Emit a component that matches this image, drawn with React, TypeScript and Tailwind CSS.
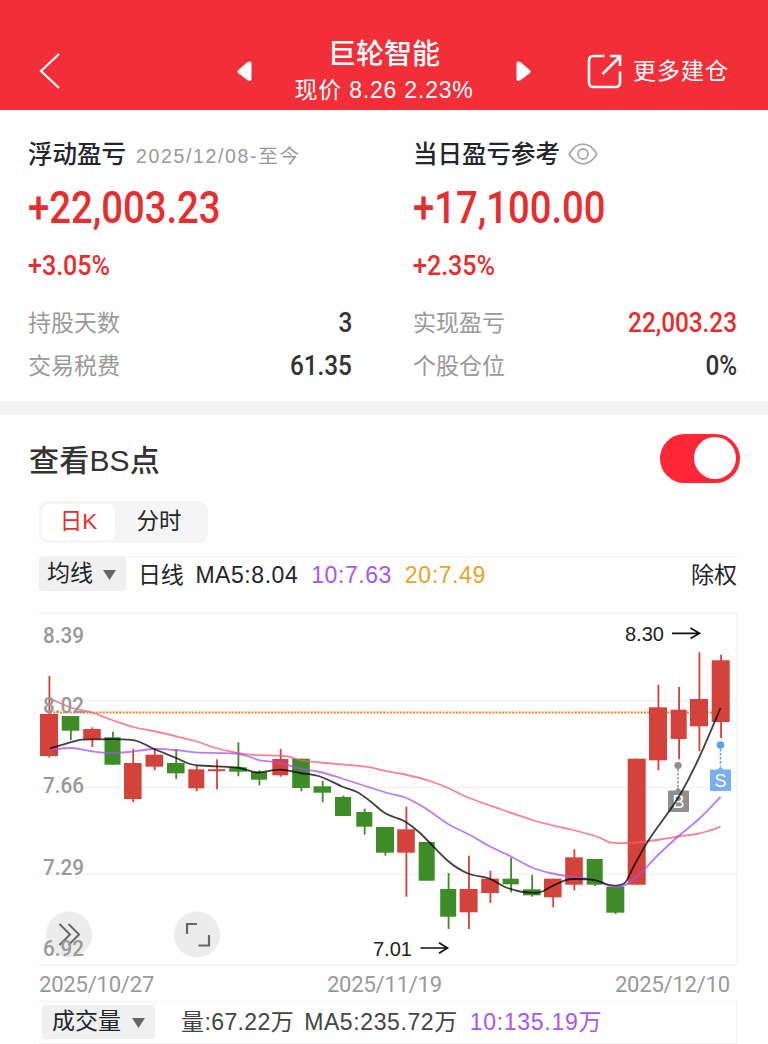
import React from 'react';
import clsx from 'clsx';

type Point = [number, number];

// [x, open/close top, open/close bottom, high, low, rising, body width]
type Candle = [number, number, number, number, number, boolean, number];

interface SummaryProps {
    title: React.ReactNode;
    amount: string;
    percent: string;
    rows: { label: string; value: string; valueClass: string }[];
}

const RED = '#d3433b';
const GREEN = '#3d8c28';

const candles: Candle[] = [
    [49, 714, 756, 676, 757.5, true, 18],
    [70.5, 716, 730.7, 716, 740, false, 17.6],
    [92, 729, 739, 727.3, 747, true, 17.6],
    [112.5, 737.3, 764.7, 731.7, 764.7, false, 16],
    [132.8, 763, 799, 749, 802.3, true, 17.6],
    [154.3, 754.7, 766.7, 749.7, 770.3, true, 17.6],
    [175.8, 763, 773.3, 749.3, 779, false, 17.6],
    [196.3, 769.3, 788.3, 765.7, 791.3, true, 16],
    [216.6, 769.2, 771.2, 759.3, 789.3, true, 17],
    [238, 767.3, 771.7, 742.3, 776.3, false, 17.6],
    [259, 772, 779.7, 770.3, 785.3, false, 16],
    [280.3, 759, 775.3, 749, 776.7, true, 16],
    [301, 758.7, 788, 758.7, 791.3, false, 17.6],
    [322.3, 786.3, 792.7, 781, 802.3, false, 17.6],
    [343, 797, 816, 795.7, 816, false, 16],
    [364.3, 812, 826.7, 808.7, 834.7, false, 16],
    [385, 827, 852.7, 827, 855.7, false, 18],
    [406, 829.3, 852.7, 806.7, 896.7, true, 17.6],
    [426.7, 842, 880.7, 842, 880.7, false, 16],
    [448.2, 889, 916.7, 873, 929, false, 16],
    [468.6, 889, 912.3, 855.7, 929, true, 18],
    [490, 878.7, 893, 870.7, 903, true, 17.6],
    [510.7, 878.7, 884.3, 857.7, 892.3, false, 16],
    [531.8, 889.3, 895.3, 875, 896.7, false, 17.6],
    [552.8, 878.7, 897.3, 878.7, 907.3, true, 17.6],
    [574, 857.3, 884.7, 849.3, 890.3, true, 17.6],
    [594.7, 859, 884.7, 859, 886, false, 16],
    [615.3, 886.7, 912.7, 886.7, 914, false, 18],
    [636.7, 758.7, 884.7, 758.7, 884.7, true, 18],
    [658, 707.3, 760.3, 684.7, 770.3, true, 18],
    [678.7, 709.7, 739, 687, 759.3, true, 16],
    [699, 699, 726.3, 652.3, 751.3, true, 18],
    [720.7, 660.3, 722, 654.7, 738, true, 18],
];

const ma5: Point[] = [
    [50, 748.5], [67, 743.3], [82, 739.7], [100, 739.3], [120, 739.3], [137, 741], [153, 748.5], [175, 757.5],
    [190, 764], [200, 765.5], [216, 766.3], [237, 767.5], [245, 769.3], [258, 772.5], [280, 769.7], [300, 773],
    [320, 776.5], [342, 786.5], [357, 792], [370, 801], [384, 812.5], [394, 817], [405, 821.5], [420, 833],
    [448, 861], [468, 873.5], [489, 878.5], [505, 887], [520, 891.5], [532, 892.7], [541, 892], [551, 886.7],
    [565, 880.3], [574, 879], [594, 880], [606, 884], [616, 885.7], [624, 883.5], [628, 878], [636, 862],
    [650, 838], [678, 798], [698, 760], [720.5, 708],
];

const ma10: Point[] = [
    [50, 749.5], [72, 748], [90, 751], [110, 753], [130, 751.8], [153, 749], [175, 750], [195, 752.3],
    [235, 753.5], [250, 757], [260, 760.3], [280, 763], [300, 768.5], [320, 772], [342, 778.5], [384, 792],
    [405, 797.5], [425, 808], [448, 824], [470, 835], [489, 846], [510, 856], [532, 867.5], [550, 873],
    [573, 877], [596, 880], [608, 885.5], [618, 887.3], [627, 884], [642, 872], [656, 857], [678, 836.5],
    [700, 818], [720.5, 797],
];

const ma20: Point[] = [
    [50, 698.5], [72, 708], [92, 712.5], [112, 720], [135, 727.5], [153, 731], [175, 736], [195, 741],
    [216, 748], [235, 752.5], [250, 754.7], [280, 755.7], [290, 757], [302, 760.7], [320, 762.5], [350, 765],
    [370, 767.3], [387, 771.3], [405, 774.5], [430, 781], [448, 788], [468, 797.5], [500, 809], [532, 820],
    [551, 825], [573, 830], [598, 837], [610, 842.3], [628, 843], [643, 841.8], [660, 839.5], [678, 836.5],
    [697, 834], [708, 831], [720.5, 826.7],
];

const priceLabels = [
    {text: '8.39', y: 643},
    {text: '8.02', y: 713},
    {text: '7.66', y: 793.3},
    {text: '7.29', y: 874.7},
    {text: '6.92', y: 956.3},
];

// Smooth curve through all points
function curve(points: Point[]) {
    let d = `M${points[0][0]} ${points[0][1]}`;
    for (let i = 0; i < points.length - 1; i++) {
        const a = points[i - 1] || points[i];
        const b = points[i];
        const c = points[i + 1];
        const e = points[i + 2] || c;
        d += ` C${b[0] + (c[0] - a[0]) / 6} ${b[1] + (c[1] - a[1]) / 6} ${c[0] - (e[0] - b[0]) / 6} ${c[1] - (e[1] - b[1]) / 6} ${c[0]} ${c[1]}`;
    }
    return d;
}

const Header: React.FC = () => (
    <header className="flex h-[110px] items-center bg-[#f22f38] text-white">
        <svg className="mt-[31px] ml-[38px] h-10 w-6" viewBox="0 0 24 40" fill="none" stroke="currentColor" strokeWidth="2.2">
            <path d="M21 3 L3 20 L21 37"/>
        </svg>
        <svg className="mt-[33px] ml-[174px] h-6 w-[18px]" viewBox="0 0 18 24" fill="currentColor">
            <path d="M2 10.2 L11 2.600 Q15.500 0 15.500 4 V18.500 Q15.500 22.500 11.500 20.300 L2 13 Q.8 11.600 2 10.200Z"/>
        </svg>
        <div className="mt-[31px] flex w-[260px] flex-col items-center">
            <h1 className="text-[28px] leading-[38px] font-medium">巨轮智能</h1>
            <p className="text-[23px] leading-[32px] tracking-[0.8px] whitespace-nowrap">现价 8.26 2.23%</p>
        </div>
        <svg className="mt-[33px] h-6 w-[18px]" viewBox="0 0 18 24" fill="currentColor">
            <path d="M16 10.2 L7 2.600 Q2.500 0 2.500 4 V18.500 Q2.500 22.500 6.500 20.300 L16 13 Q17.200 11.600 16 10.200Z"/>
        </svg>
        <button type="button" className="mt-[32px] ml-[54px] flex items-center">
            <svg className="h-9 w-9" viewBox="0 0 36 36" fill="none" stroke="currentColor" strokeWidth="2.6">
                <path d="M18.500 3 H7.500 Q3 3 3 7.500 V29.500 Q3 34 7.500 34 H29.500 Q34 34 34 29.500 V18.500"/>
                <path d="M16.500 21 L33.500 4 M24 3 H34 V13"/>
            </svg>
            <span className="ml-[11px] text-[23px] leading-9 tracking-[1px]">更多建仓</span>
        </button>
    </header>
);

const Summary: React.FC<SummaryProps> = ({title, amount, percent, rows}) => (
    <div className="w-[324px]">
        <div className="flex h-9 items-center whitespace-nowrap">{title}</div>
        <div className="mt-[5px] h-[60px] w-max origin-left scale-x-[0.85] font-[Roboto] text-[45px] leading-[60px] font-medium text-[#e62e2e]">
            {amount}
        </div>
        <div className="mt-[10px] w-max origin-left scale-x-[0.895] font-[Roboto] text-[28px] leading-9 font-medium text-[#e62e2e]">
            {percent}
        </div>
        <div className="mt-[18px]">
            {rows.map((row) => (
                <div key={row.label} className="flex h-[43px] items-center justify-between">
                    <span className="text-[23px] text-[#999]">{row.label}</span>
                    <span className={clsx('origin-right scale-x-[0.9] font-[Roboto] text-[27px] font-medium', row.valueClass)}>
                        {row.value}
                    </span>
                </div>
            ))}
        </div>
    </div>
);

const Caret: React.FC = () => (
    <svg className="mt-1 h-[10px] w-[13px]" viewBox="0 0 13 10" fill="#666">
        <path d="M0 0 H13 L6.500 10Z"/>
    </svg>
);

const CandleChart: React.FC = () => (
    <svg className="block h-[372px] w-[768px]" viewBox="0 597 768 372" fill="none">
        <path d="M39 613.500 H737 M39 700.500 H737 M39 787.500 H737 M39 874 H737 M39 965 H737 M737 613.500 V965" stroke="#f3f3f3" strokeWidth="1.300"/>

        {/* Floating chart buttons */}
        <circle cx="69" cy="934.500" r="23" fill="#ececec"/>
        <path d="M59.500 924 L70 934.500 L59.500 945 M68.500 924 L79 934.500 L68.500 945" stroke="#666" strokeWidth="2"/>
        <circle cx="197" cy="934.500" r="23" fill="#ececec"/>
        <path d="M187 934 V924 H197 M209 935 V945.500 H198.500" stroke="#666" strokeWidth="2.200"/>

        {/* Cost line */}
        <path d="M50 712.500 H712" stroke="#f0812f" strokeWidth="1.800" strokeDasharray="2 1.300"/>

        {candles.map(([x, top, bottom, high, low, rising, width]) => (
            <g key={x} fill={rising ? RED : GREEN}>
                <rect x={x - 0.5} y={high} width="1.800" height={low - high}/>
                <rect x={x - width / 2} y={top} width={width} height={bottom - top}/>
            </g>
        ))}

        {/* Buy marker */}
        <circle cx="678" cy="765.500" r="3.600" fill="#8f8f8f"/>
        <path d="M678 769 V789" stroke="#8f8f8f" strokeWidth="1.500" strokeDasharray="2.500 1.500"/>
        <path d="M669 790.500 H675 L678 787.500 L681 790.500 H688 Q689 790.500 689 791.500 V811 Q689 812 688 812 H669 Q668 812 668 811 V791.500 Q668 790.500 669 790.500Z" fill="#8f8f8f"/>
        <text x="678.500" y="807.500" textAnchor="middle" fontSize="18" fill="#fff" className="font-['Liberation_Sans']">B</text>

        {/* Sell marker */}
        <circle cx="720.500" cy="745" r="3.800" fill="#5b9ff0"/>
        <path d="M720.500 749 V766" stroke="#5b9ff0" strokeWidth="1.500" strokeDasharray="2.500 1.500"/>
        <path d="M711 769.500 H717.500 L720.500 766.500 L723.500 769.500 H730 Q731 769.500 731 770.500 V790 Q731 791 730 791 H711 Q710 791 710 790 V770.500 Q710 769.500 711 769.500Z" fill="#78b0f2"/>
        <text x="720.500" y="787" textAnchor="middle" fontSize="18" fill="#fff" className="font-['Liberation_Sans']">S</text>

        <g strokeWidth="1.800">
            <path d={curve(ma20)} stroke="#f5596f" strokeOpacity="0.750"/>
            <path d={curve(ma10)} stroke="#a450ee" strokeOpacity="0.750"/>
            <path d={curve(ma5)} stroke="#000" strokeOpacity="0.750"/>
        </g>

        <g fontSize="22" fontWeight="500" fill="#999" className="font-[Roboto]">
            {priceLabels.map((label) => (
                <text key={label.text} x="43" y={label.y} textLength="41" lengthAdjust="spacingAndGlyphs">{label.text}</text>
            ))}
        </g>

        {/* High and low callouts */}
        <g fontSize="20" fill="#222" className="font-['Liberation_Sans']">
            <text x="625" y="641">8.30</text>
            <text x="373" y="955.500">7.01</text>
        </g>
        <g stroke="#111" strokeWidth="1.700">
            <path d="M672 633.300 H699 M690.500 628 L699.500 633.300 L690.500 638.500"/>
            <path d="M420.500 948 H447 M439 942.700 L447.500 948 L439 953.300"/>
        </g>
    </svg>
);

const App: React.FC = () => {
    return (
        <div className="h-[1044px] w-[768px] overflow-hidden bg-[#fefefe] font-['Liberation_Sans','Noto_Sans_CJK_SC',sans-serif] text-[#222529]">
            <Header/>

            {/* Profit summary */}
            <section className="flex h-[291px] justify-between pt-[27px] pr-[31px] pl-[28px]">
                <Summary
                    title={
                        <>
                            <h2 className="text-[24.5px] font-medium">浮动盈亏</h2>
                            <span className="mt-[3px] ml-[10px] text-[19.500px] tracking-[1.650px] text-[#999]">2025/12/08-至今</span>
                        </>
                    }
                    amount="+22,003.23"
                    percent="+3.05%"
                    rows={[
                        {label: '持股天数', value: '3', valueClass: 'text-[#333]'},
                        {label: '交易税费', value: '61.35', valueClass: 'text-[#333]'},
                    ]}
                />
                <Summary
                    title={
                        <>
                            <h2 className="text-[24.5px] font-medium">当日盈亏参考</h2>
                            <svg className="mb-[2px] ml-[8px] h-[22px] w-[30px]" viewBox="0 0 30 22" fill="none" stroke="#aaa" strokeWidth="1.800">
                                <path d="M1.200 11 Q7 1.200 15 1.200 T28.800 11 Q23 20.800 15 20.800 T1.200 11Z"/>
                                <circle cx="15" cy="11" r="5"/>
                            </svg>
                        </>
                    }
                    amount="+17,100.00"
                    percent="+2.35%"
                    rows={[
                        {label: '实现盈亏', value: '22,003.23', valueClass: 'text-[#e62e2e]'},
                        {label: '个股仓位', value: '0%', valueClass: 'text-[#333]'},
                    ]}
                />
            </section>

            <div className="h-[14px] bg-[#f3f3f3]"/>

            <section>
                <div className="flex h-[86px] items-center justify-between pr-[28px] pl-[29px]">
                    <h2 className="pt-[5px] text-[30px] font-medium tracking-[0.2px] text-[#333]">查看BS点</h2>
                    <button type="button" role="switch" aria-checked="true" className="flex h-[49px] w-[80px] items-center justify-end rounded-full bg-[#ff2638] pr-[4px]">
                        <span className="size-[42px] rounded-full bg-white"/>
                    </button>
                </div>

                {/* Period tabs */}
                <div className="ml-[39px] flex h-[42px] w-[169px] items-center rounded-[9px] bg-[#f5f5f5] p-[3px] text-[22.500px]">
                    <button type="button" className="h-[36px] w-[73px] rounded-[7px] bg-white text-[#e62e2e]">日K</button>
                    <button type="button" className="h-[36px] flex-1 pr-[2px]">分时</button>
                </div>

                {/* Moving averages */}
                <div className="mt-[13px] mr-[31px] ml-[39px] flex h-[41px] items-start border-t border-[#f4f4f4] text-[23px] whitespace-nowrap">
                    <button type="button" className="flex h-[34px] w-[87px] items-center gap-[10px] rounded-[3px] bg-[#f0f0f0] pb-[2px] pl-[8px]">
                        <span>均线</span>
                        <Caret/>
                    </button>
                    <span className="ml-[12px] leading-[36px] tracking-[-0.3px]">日线</span>
                    <span className="ml-[12px] leading-[36px] tracking-[0.550px]">MA5:8.04</span>
                    <span className="ml-[13px] leading-[36px] tracking-[0.550px] text-[#a956ee]">10:7.63</span>
                    <span className="ml-[13px] leading-[36px] tracking-[0.600px] text-[#e5a528]">20:7.49</span>
                    <span className="ml-auto leading-[36px]">除权</span>
                </div>

                <CandleChart/>

                <div className="mr-[38px] ml-[39px] flex h-[32px] items-center justify-between pb-[2px] font-[Roboto] text-[22px] tracking-[-0.2px] text-[#999]">
                    <span>2025/10/27</span>
                    <span>2025/11/19</span>
                    <span>2025/12/10</span>
                </div>

                {/* Volume */}
                <div className="mr-[31px] ml-[39px] flex h-[43px] items-start border-y border-r border-[#f2f2f2] pt-[3px] pl-[3px] text-[23px] whitespace-nowrap">
                    <button type="button" className="flex h-[34px] w-[113px] items-center gap-[11px] rounded-[3px] bg-[#f0f0f0] pb-[2px] pl-[10px]">
                        <span>成交量</span>
                        <Caret/>
                    </button>
                    <span className="ml-[26px] leading-[35px] tracking-[0.4px] text-[#444]">量:67.22万</span>
                    <span className="ml-[10px] leading-[35px] tracking-[0.6px] text-[#444]">MA5:235.72万</span>
                    <span className="ml-[12px] leading-[35px] tracking-[0.7px] text-[#a956ee]">10:135.19万</span>
                </div>
            </section>
        </div>
    );
};

export default App;
